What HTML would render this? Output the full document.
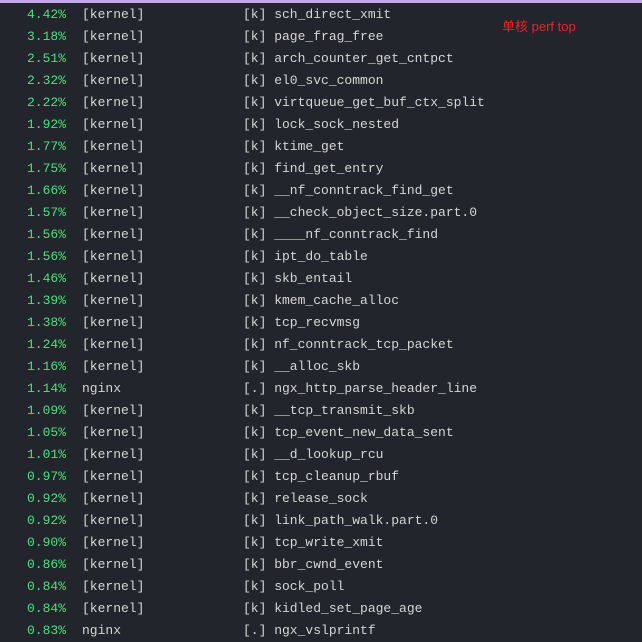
<!DOCTYPE html>
<html><head><meta charset="utf-8"><style>
html,body{margin:0;padding:0;}
body{width:642px;height:641px;background:#22252b;overflow:hidden;position:relative;font-family:"Liberation Mono",monospace;font-size:13px;color:#d6d6d6;}
.top{position:absolute;left:0;top:0;width:642px;height:3px;background:#c4a6ee;}
.r{position:absolute;left:0;height:22px;line-height:22px;white-space:pre;width:642px;}
.p{position:absolute;right:576px;color:#4ee07e;}
.m{position:absolute;left:82px;}
.s{position:absolute;left:243px;}
.t{position:absolute;left:502px;top:16px;color:#e8262a;font-family:"Liberation Sans","Noto Sans CJK SC",sans-serif;font-size:13px;}
</style></head><body>
<div class="top"></div>
<div class="t">单核 perf top</div>
<div id="c"></div>
<div class="r" style="top:4px"><span class="p">4.42%</span><span class="m">[kernel]</span><span class="s">[k] sch_direct_xmit</span></div>
<div class="r" style="top:26px"><span class="p">3.18%</span><span class="m">[kernel]</span><span class="s">[k] page_frag_free</span></div>
<div class="r" style="top:48px"><span class="p">2.51%</span><span class="m">[kernel]</span><span class="s">[k] arch_counter_get_cntpct</span></div>
<div class="r" style="top:70px"><span class="p">2.32%</span><span class="m">[kernel]</span><span class="s">[k] el0_svc_common</span></div>
<div class="r" style="top:92px"><span class="p">2.22%</span><span class="m">[kernel]</span><span class="s">[k] virtqueue_get_buf_ctx_split</span></div>
<div class="r" style="top:114px"><span class="p">1.92%</span><span class="m">[kernel]</span><span class="s">[k] lock_sock_nested</span></div>
<div class="r" style="top:136px"><span class="p">1.77%</span><span class="m">[kernel]</span><span class="s">[k] ktime_get</span></div>
<div class="r" style="top:158px"><span class="p">1.75%</span><span class="m">[kernel]</span><span class="s">[k] find_get_entry</span></div>
<div class="r" style="top:180px"><span class="p">1.66%</span><span class="m">[kernel]</span><span class="s">[k] __nf_conntrack_find_get</span></div>
<div class="r" style="top:202px"><span class="p">1.57%</span><span class="m">[kernel]</span><span class="s">[k] __check_object_size.part.0</span></div>
<div class="r" style="top:224px"><span class="p">1.56%</span><span class="m">[kernel]</span><span class="s">[k] ____nf_conntrack_find</span></div>
<div class="r" style="top:246px"><span class="p">1.56%</span><span class="m">[kernel]</span><span class="s">[k] ipt_do_table</span></div>
<div class="r" style="top:268px"><span class="p">1.46%</span><span class="m">[kernel]</span><span class="s">[k] skb_entail</span></div>
<div class="r" style="top:290px"><span class="p">1.39%</span><span class="m">[kernel]</span><span class="s">[k] kmem_cache_alloc</span></div>
<div class="r" style="top:312px"><span class="p">1.38%</span><span class="m">[kernel]</span><span class="s">[k] tcp_recvmsg</span></div>
<div class="r" style="top:334px"><span class="p">1.24%</span><span class="m">[kernel]</span><span class="s">[k] nf_conntrack_tcp_packet</span></div>
<div class="r" style="top:356px"><span class="p">1.16%</span><span class="m">[kernel]</span><span class="s">[k] __alloc_skb</span></div>
<div class="r" style="top:378px"><span class="p">1.14%</span><span class="m">nginx</span><span class="s">[.] ngx_http_parse_header_line</span></div>
<div class="r" style="top:400px"><span class="p">1.09%</span><span class="m">[kernel]</span><span class="s">[k] __tcp_transmit_skb</span></div>
<div class="r" style="top:422px"><span class="p">1.05%</span><span class="m">[kernel]</span><span class="s">[k] tcp_event_new_data_sent</span></div>
<div class="r" style="top:444px"><span class="p">1.01%</span><span class="m">[kernel]</span><span class="s">[k] __d_lookup_rcu</span></div>
<div class="r" style="top:466px"><span class="p">0.97%</span><span class="m">[kernel]</span><span class="s">[k] tcp_cleanup_rbuf</span></div>
<div class="r" style="top:488px"><span class="p">0.92%</span><span class="m">[kernel]</span><span class="s">[k] release_sock</span></div>
<div class="r" style="top:510px"><span class="p">0.92%</span><span class="m">[kernel]</span><span class="s">[k] link_path_walk.part.0</span></div>
<div class="r" style="top:532px"><span class="p">0.90%</span><span class="m">[kernel]</span><span class="s">[k] tcp_write_xmit</span></div>
<div class="r" style="top:554px"><span class="p">0.86%</span><span class="m">[kernel]</span><span class="s">[k] bbr_cwnd_event</span></div>
<div class="r" style="top:576px"><span class="p">0.84%</span><span class="m">[kernel]</span><span class="s">[k] sock_poll</span></div>
<div class="r" style="top:598px"><span class="p">0.84%</span><span class="m">[kernel]</span><span class="s">[k] kidled_set_page_age</span></div>
<div class="r" style="top:620px"><span class="p">0.83%</span><span class="m">nginx</span><span class="s">[.] ngx_vslprintf</span></div>
</body></html>
